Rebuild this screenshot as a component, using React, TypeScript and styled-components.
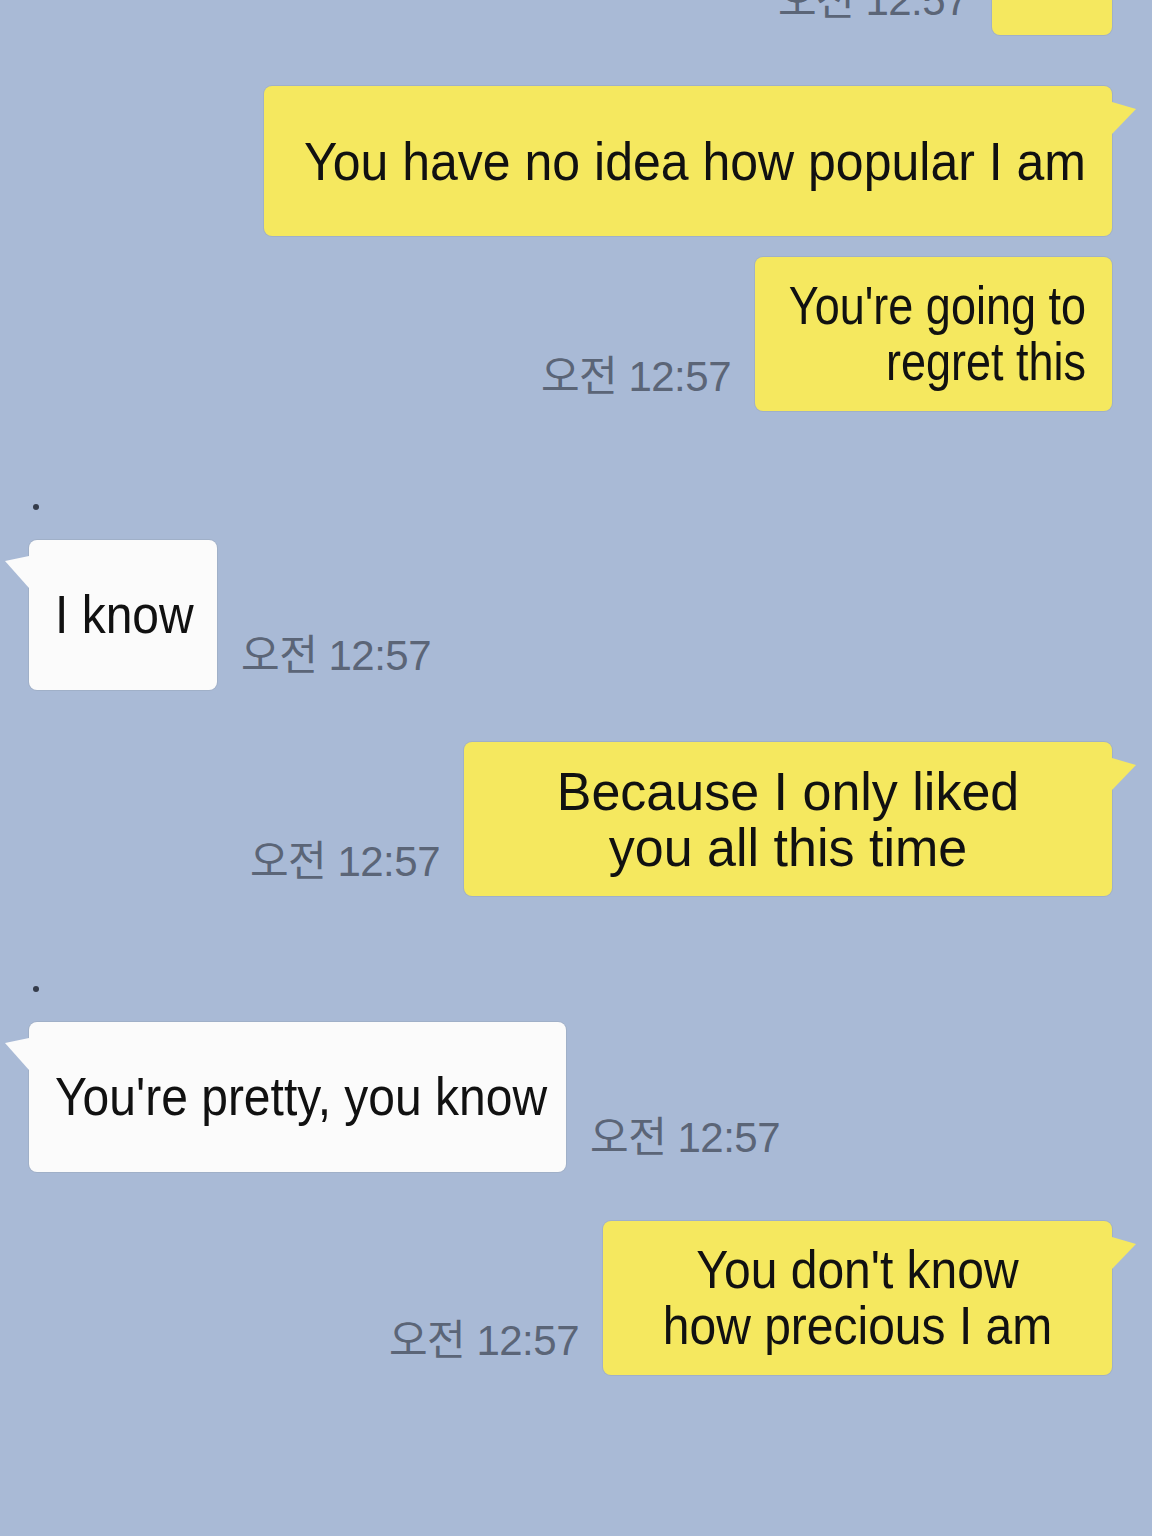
import styled, { createGlobalStyle, css } from 'styled-components';

const GlobalStyle = createGlobalStyle`
  html, body {
    margin: 0;
    padding: 0;
    background: #a9bad6;
  }

  body {
    font-family: "Liberation Sans", Arial, "Noto Sans CJK KR", sans-serif;
    overflow: hidden;
  }
`;

const StyledPage = styled.main`
  background: #a9bad6;
  box-sizing: border-box;
  min-height: 1536px;
  overflow: hidden;
  padding: 0 40px 0 29px;
`;

const StyledRow = styled.div<{ $mine?: boolean; $gap: number }>`
  align-items: flex-end;
  display: flex;
  gap: 24px;
  justify-content: ${(p) => (p.$mine ? 'flex-end' : 'flex-start')};
  margin-top: ${(p) => p.$gap}px;
`;

const StyledTime = styled.span`
  color: #5b6577;
  font-size: 42px;
  letter-spacing: -0.5px;
  line-height: 42px;
  margin-bottom: 13px;
  white-space: nowrap;
`;

const rightTail = css`
  &::after {
    background: inherit;
    clip-path: polygon(0 0, 100% 22%, 0 100%);
    content: '';
    height: 32px;
    left: 100%;
    position: absolute;
    top: 16px;
    width: 24px;
  }
`;

const leftTail = css`
  &::after {
    background: inherit;
    clip-path: polygon(100% 0, 0 16%, 100% 100%);
    content: '';
    height: 32px;
    position: absolute;
    right: 100%;
    top: 16px;
    width: 24px;
  }
`;

const StyledBubble = styled.div<{
  $mine?: boolean;
  $w: number;
  $tail?: boolean;
  $align: 'left' | 'center' | 'right';
}>`
  background: ${(p) => (p.$mine ? '#f5e85f' : '#fbfbfb')};
  border-radius: 8px;
  box-shadow: 0 0 0 1px rgba(70, 70, 40, 0.08);
  box-sizing: border-box;
  color: #111;
  display: flex;
  flex-direction: column;
  justify-content: center;
  min-height: 150px;
  padding: 21px 26px;
  position: relative;
  text-align: ${(p) => p.$align};
  width: ${(p) => p.$w}px;

  ${(p) => p.$tail && (p.$mine ? rightTail : leftTail)}
`;

// the chat font is a tall, narrow sans: a smaller size stretched upward
const StyledText = styled.span<{ $size: number }>`
  display: block;
  font-size: ${(p) => p.$size}px;
  line-height: 56px;
  transform: scaleY(${(p) => (54.5 / p.$size).toFixed(3)});
  white-space: nowrap;
`;

const StyledName = styled.div<{ $gap: number }>`
  background: #353c4b;
  border-radius: 50%;
  height: 6px;
  margin: ${(p) => p.$gap}px 0 30px 4px;
  width: 6px;
`;

const TIME = '오전 12:57';

const App: React.FC = () => {
  return (
    <>
      <GlobalStyle />
      <StyledPage>
        <StyledRow $mine $gap={-115}>
          <StyledTime>{TIME}</StyledTime>
          <StyledBubble $mine $tail $w={120} $align="center" />
        </StyledRow>

        <StyledRow $mine $gap={51}>
          <StyledBubble $mine $tail $w={848} $align="right">
            <StyledText $size={50}>You have no idea how popular I am</StyledText>
          </StyledBubble>
        </StyledRow>

        <StyledRow $mine $gap={21}>
          <StyledTime>{TIME}</StyledTime>
          <StyledBubble $mine $w={357} $align="right">
            <StyledText $size={45}>You're going to</StyledText>
            <StyledText $size={45}>regret this</StyledText>
          </StyledBubble>
        </StyledRow>

        <StyledName $gap={93} />
        <StyledRow $gap={0}>
          <StyledBubble $tail $w={188} $align="left">
            <StyledText $size={48}>I know</StyledText>
          </StyledBubble>
          <StyledTime>{TIME}</StyledTime>
        </StyledRow>

        <StyledRow $mine $gap={52}>
          <StyledTime>{TIME}</StyledTime>
          <StyledBubble $mine $tail $w={648} $align="center">
            <StyledText $size={52}>Because I only liked</StyledText>
            <StyledText $size={52}>you all this time</StyledText>
          </StyledBubble>
        </StyledRow>

        <StyledName $gap={90} />
        <StyledRow $gap={0}>
          <StyledBubble $tail $w={537} $align="left">
            <StyledText $size={48}>You're pretty, you know</StyledText>
          </StyledBubble>
          <StyledTime>{TIME}</StyledTime>
        </StyledRow>

        <StyledRow $mine $gap={49}>
          <StyledTime>{TIME}</StyledTime>
          <StyledBubble $mine $tail $w={509} $align="center">
            <StyledText $size={48}>You don't know</StyledText>
            <StyledText $size={48}>how precious I am</StyledText>
          </StyledBubble>
        </StyledRow>
      </StyledPage>
    </>
  );
};

export default App;
